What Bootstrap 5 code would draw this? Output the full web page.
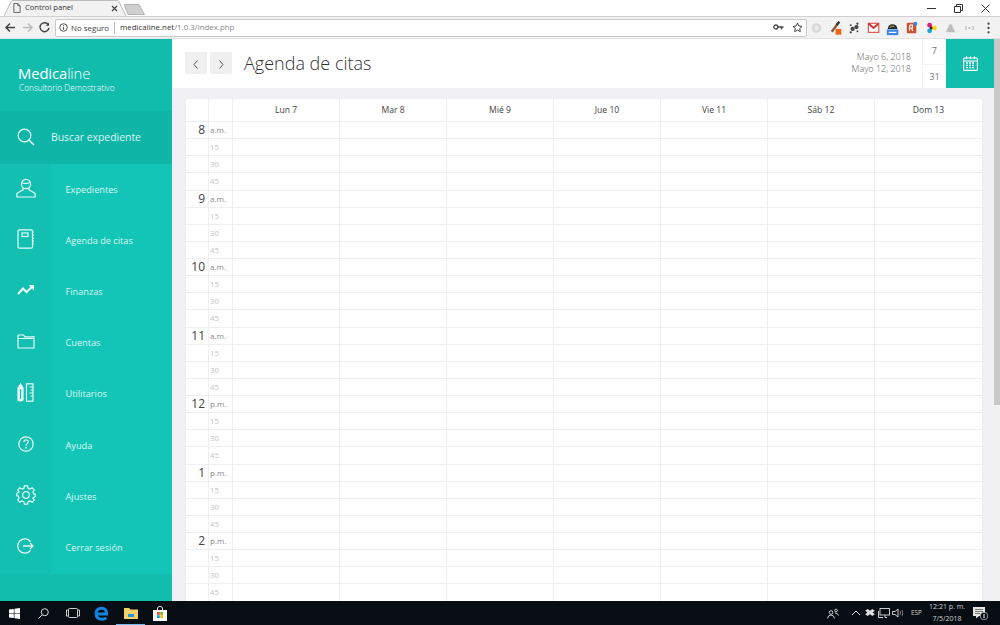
<!DOCTYPE html>
<html lang="es">
  <head>
    <meta charset="UTF-8" />
    <title>Control panel</title>
    <link href="https://cdn.jsdelivr.net/npm/bootstrap@5.3.3/dist/css/bootstrap.min.css" rel="stylesheet" />
    <style>
      html, body { height: 100%; overflow: hidden; }
      body { font-family: "Open Sans", "Liberation Sans", sans-serif; background: #fff; color: #333; display: flex; flex-direction: column; width: 1000px; height: 625px; }

      /* browser chrome */
      .tab-strip { height: 16px; background: #fff; flex: none; font-family: "Open Sans", "Liberation Sans", Arial, sans-serif; }
      .chrome-tab { width: 122px; height: 16px; margin-left: 4px; padding: 0 8px 0 9px; font-size: 7.6px; color: #333; position: relative; }
      .tab-shape { position: absolute; left: 0; top: 0; }
      .tab-text { position: relative; }
      .new-tab { width: 21px; height: 11px; margin: 4px 0 0 -2px; }
      .win-btns { width: 150px; margin-right: 1px; }
      .win-btn { width: 27px; height: 16px; }
      .tool-bar { height: 23px; background: #f2f2f2; flex: none; border-top: 1px solid #d0d0d0; border-bottom: 1px solid #e2e2e2; padding-left: 2px; font-family: "Open Sans", "Liberation Sans", Arial, sans-serif; }
      .nav-arrow { width: 17px; height: 17px; flex: none; }
      .addr-bar { width: 752px; height: 18px; margin-left: 2px; background: #fff; border: 1px solid #c9c9c9; border-radius: 2px; font-size: 7.9px; padding: 0 3px 0 3px; flex: none; }
      .addr-safe { color: #444; padding-right: 5px; margin-right: 5px; border-right: 1px solid #bbb; line-height: 12px; margin-left: 3px; }
      .addr-host { color: #333; }
      .addr-path { color: #888; }
      .ext-row { flex: none; }
      .ext-icon { width: 19.1px; height: 16px; flex: none; }

      /* app */
      .app-row { flex: 1 1 auto; min-height: 0; }
      .side-panel { width: 172px; flex: none; background: #12bdae; color: #d8f5f2; }
      .brand-box { height: 72px; padding: 26px 0 0 18px; background: #11bcad; }
      .brand-name { font-size: 14.8px; line-height: 17px; color: #fff; font-weight: 400; letter-spacing: -.1px; }
      .brand-name span { font-weight: 300; }
      .brand-sub { font-size: 8.3px; line-height: 11px; font-weight: 300; color: #fff; padding-left: 1px; }
      .search-row { height: 53px; background: #0fb5a6; font-size: 10.4px; color: #dcf6f3; }
      .search-ico { width: 51px; padding-bottom: 1px; }
      .menu-row { height: 51.2px; font-size: 9.2px; color: #dcf6f3; text-decoration: none; background: #13c5b6; }
      .menu-ico { width: 51px; height: 100%; background: #12bfb0; flex: none; padding-bottom: 4px; }
      .menu-txt { padding-left: 14.5px; }

      .main-pane { flex: 1 1 auto; min-width: 0; background: #f0f0f5; }
      .head-bar { height: 49px; background: #fff; flex: none; padding-left: 13px; }
      .pager-btn { width: 22px; height: 22px; background: #f0f0f0; border: 0; border-radius: 2px; padding: 3px 0 0; margin: 0 3px 2px 0; }
      .page-title { font-size: 18px; font-weight: 300; color: #333; margin: 0 0 2px 9px; line-height: 24px; }
      .date-range { font-size: 9px; line-height: 12px; color: #666; text-align: right; padding: 0 11px 2px 0; font-weight: 300; }
      .range-nums { width: 24px; font-size: 9.2px; color: #777; text-align: center; border-left: 1px solid #f3f3f3; }
      .range-nums > div { height: 24.5px; line-height: 24.5px; }
      .range-nums > div + div { border-top: 1px solid #f3f3f3; }
      .cal-btn { width: 48px; background: #12bdae; }
      .scroll-rail { width: 6px; background: #f1f1f1; flex: none; }
      .scroll-thumb { height: 366px; background: #c8c8c8; }

      .sheet-wrap { flex: 1 1 auto; min-height: 0; overflow: hidden; padding: 10px 12px 0 13px; }
      .week-sheet { background: #fff; width: 797px; table-layout: fixed; border-collapse: collapse; margin: 0; }
      .week-sheet th, .week-sheet td { border: 1px solid #efefef; padding: 0; }
      .week-sheet th { height: 23px; font-size: 8.6px; font-weight: 400; text-align: center; color: #444; vertical-align: middle; padding-top: 1px; }
      .week-sheet td { height: 17.125px; line-height: 12px; }
      .hour-num { font-size: 12px; color: #444; text-align: right; padding-right: 3px !important; font-weight: 400; }
      .hour-mer { font-size: 8px; color: #888; padding-left: 1px !important; }
      .hour-min { font-size: 7.8px; color: #c4c4c4; padding-left: 1px !important; }
      .col-hour { width: 23px; }
      .col-mer { width: 24px; }
      .col-day { width: 107px; }
      .col-last { width: 108px; }

      /* taskbar */
      .task-bar { height: 24px; background: #070d12; flex: none; color: #cfd2d4; font-family: "Open Sans", "Liberation Sans", Arial, sans-serif; font-size: 6.4px; }
      .task-ico { width: 29px; height: 24px; }
      .task-ico.is-open { border-bottom: 1px solid #76b9ed; }
      .tray-ico { width: 14px; height: 24px; }
      .tray-people { margin-right: 9px; }
      .tray-lang { width: 11px; margin: 0 7px 0 6px; text-align: center; white-space: nowrap; display: flex; justify-content: center; }
      .clock-box { width: 36px; text-align: center; line-height: 12px; font-size: 7px; white-space: nowrap; margin-right: 7px; display: flex; flex-direction: column; align-items: center; }
      .tray-notify { width: 16px; margin-right: 12px; }
    </style>
  </head>
  <body>
    <div class="tab-strip d-flex">
      <div class="chrome-tab d-flex align-items-center">
        <svg class="tab-shape" width="124" height="16" viewBox="0 0 124 16"><path d="M0 16 L7 1.5 Q7.5 .5 9 .5 H113 Q114.500 .5 115 1.500 L122 16" fill="#f2f2f2" stroke="#bdbdbd" /></svg>
        <svg class="tab-text me-1" width="8" height="10" viewBox="0 0 9 11" fill="none" stroke="#555"><path d="M1 .5 H5.500 L8 3 V10.500 H1 Z M5.500 .5 V3 H8" /></svg>
        <span class="tab-text flex-grow-1">Control panel</span>
        <svg class="tab-text" width="7" height="7" viewBox="0 0 7 7" stroke="#444" stroke-width="1.200"><path d="M1 1 L6 6 M6 1 L1 6" /></svg>
      </div>
      <svg class="new-tab" viewBox="0 0 21 11"><path d="M0 .5 H15 L20.500 10.500 H4 Z" fill="#cfcfcf" stroke="#b5b5b5" /></svg>
      <div class="win-btns d-flex ms-auto justify-content-end">
        <div class="win-btn d-flex align-items-center justify-content-center"><svg width="9" height="9" stroke="#333"><path d="M0 4.500 H9" /></svg></div>
        <div class="win-btn d-flex align-items-center justify-content-center"><svg width="9" height="9" fill="none" stroke="#333"><path d="M.5 2.500 H6.500 V8.500 H.5 Z M2.500 2.500 V.5 H8.500 V6.500 H6.500" /></svg></div>
        <div class="win-btn d-flex align-items-center justify-content-center"><svg width="9" height="9" stroke="#333"><path d="M.5 .5 L8.500 8.500 M8.500 .5 L.5 8.500" /></svg></div>
      </div>
    </div>

    <div class="tool-bar d-flex align-items-center">
      <svg class="nav-arrow" viewBox="0 0 17 17" fill="none" stroke="#444" stroke-width="1.500"><path d="M13 8.500 H4 M8 4.500 L4 8.500 L8 12.500" /></svg>
      <svg class="nav-arrow" viewBox="0 0 17 17" fill="none" stroke="#bbb" stroke-width="1.500"><path d="M4 8.500 H13 M9 4.500 L13 8.500 L9 12.500" /></svg>
      <svg class="nav-arrow" viewBox="0 0 17 17" fill="none" stroke="#444" stroke-width="1.400"><path d="M12.500 6 A4.500 4.500 0 1 0 13 9" /><path d="M13 3.500 V6.800 H9.700" fill="#444" stroke="none" /></svg>
      <div class="addr-bar d-flex align-items-center">
        <svg width="9" height="9" viewBox="0 0 10 10" fill="none" stroke="#444"><circle cx="5" cy="5" r="4.200" /><path d="M5 4.300 V7.500 M5 2.500 V3.500" /></svg>
        <span class="addr-safe">No seguro</span>
        <span class="addr-host">medicaline.net</span><span class="addr-path">/1.0.3/index.php</span>
        <svg class="ms-auto me-1" width="11" height="7" viewBox="0 0 11 7" fill="none" stroke="#444" stroke-width="1.300"><circle cx="2.800" cy="3" r="2" /><path d="M5 3 H10.500 M8.500 3 V5.500" /></svg>
        <svg class="ms-1" width="11" height="11" viewBox="0 0 11 11" fill="none" stroke="#444"><path d="M5.500 1 L6.900 4 L10 4.400 L7.700 6.500 L8.300 9.700 L5.500 8.100 L2.700 9.700 L3.300 6.500 L1 4.400 L4.100 4 Z" /></svg>
      </div>
      <div class="ext-row d-flex align-items-center">
        <svg class="ext-icon" viewBox="0 0 20 16"><circle cx="10" cy="8" r="5" fill="#d8d8d8" /><circle cx="10" cy="8" r="2.500" fill="#ececec" /></svg>
        <svg class="ext-icon" viewBox="0 0 20 16"><path d="M6 12 L12 4" stroke="#8a5a3a" stroke-width="2.500" /><path d="M11 5 L14 1.500" stroke="#333" stroke-width="2.500" /><rect x="10" y="9" width="6" height="6" fill="#f2640f" /></svg>
        <svg class="ext-icon" viewBox="0 0 20 16" fill="#444"><circle cx="8" cy="9" r="2.200" /><circle cx="12" cy="7" r="2.200" /><circle cx="13" cy="3.500" r="1.200" /><circle cx="6" cy="12.500" r="1.200" /><circle cx="6" cy="5" r="1" /><circle cx="13" cy="11.500" r="1" /></svg>
        <svg class="ext-icon" viewBox="0 0 20 16"><rect x="4.500" y="3" width="11" height="9.500" fill="#fff" stroke="#d3332b" /><path d="M5 3.500 L10 8 L15 3.500" fill="none" stroke="#d3332b" stroke-width="2" /></svg>
        <svg class="ext-icon" viewBox="0 0 20 16"><path d="M5 9 A5 5 0 0 1 15 9 Z" fill="#1c2a36" /><path d="M7 8 A3 3 0 0 1 12 7" fill="none" stroke="#e8b030" /><rect x="4" y="9.500" width="12" height="6" fill="#3d85e6" /><rect x="6" y="12" width="8" height="1.200" fill="#fff" /></svg>
        <svg class="ext-icon" viewBox="0 0 20 16"><rect x="5" y="2.500" width="10" height="11" rx="1" fill="#c8512b" /><path d="M8 5 V11 M8 5 H11 V8 H8 M9.500 8 L11.500 11" fill="none" stroke="#fff" stroke-width="1.100" /><circle cx="14" cy="3.500" r="2" fill="#3d85e6" /></svg>
        <svg class="ext-icon" viewBox="0 0 20 16"><circle cx="8" cy="5" r="2.500" fill="#d61f7e" /><circle cx="8" cy="11" r="2.500" fill="#16a5d8" /><circle cx="13" cy="8" r="2.500" fill="#f4d21e" /><circle cx="9.500" cy="8" r="1.500" fill="#222" /></svg>
        <svg class="ext-icon" viewBox="0 0 20 16"><path d="M5 12.500 L9 4 H11 L15 12.500 Z" fill="#bdbdbd" /></svg>
        <svg class="ext-icon" viewBox="0 0 20 16" fill="none" stroke="#aaa"><path d="M6.500 6 Q5.500 8 6.500 10 M13.500 6 Q14.500 8 13.500 10" /><circle cx="10" cy="8" r="1" fill="#aaa" stroke="none" /></svg>
        <svg class="ext-icon" viewBox="0 0 20 16" fill="#444"><circle cx="10" cy="3.500" r="1.200" /><circle cx="10" cy="8" r="1.200" /><circle cx="10" cy="12.500" r="1.200" /></svg>
      </div>
    </div>

    <div class="app-row d-flex">
      <aside class="side-panel d-flex flex-column">
        <div class="brand-box">
          <div class="brand-name">Medica<span>line</span></div>
          <div class="brand-sub">Consultorio Demostrativo</div>
        </div>
        <div class="search-row d-flex align-items-center">
          <div class="search-ico d-flex justify-content-center">
            <svg width="18" height="18" viewBox="0 0 18 18" fill="none" stroke="#e8fbf9" stroke-width="1.200"><circle cx="7.500" cy="7.500" r="6.300" /><path d="M12 12 L17 17" stroke-width="1.600" /></svg>
          </div>
          <span>Buscar expediente</span>
        </div>
        <a class="menu-row d-flex align-items-center" href="#">
          <span class="menu-ico d-flex align-items-center justify-content-center">
            <svg width="20" height="20" viewBox="0 0 20 20" fill="none" stroke="#e8fbf9" stroke-width="1.200"><circle cx="10" cy="6" r="4.600" /><path d="M5.600 5 Q10 6 14.400 4.500" /><path d="M7 10 V12 L1.500 15 Q.800 15.500 .800 16.500 V19 H19.200 V16.500 Q19.200 15.500 18.500 15 L13 12 V10" /></svg>
          </span>
          <span class="menu-txt">Expedientes</span>
        </a>
        <a class="menu-row d-flex align-items-center" href="#">
          <span class="menu-ico d-flex align-items-center justify-content-center">
            <svg width="18" height="20" viewBox="0 0 18 20" fill="none" stroke="#e8fbf9" stroke-width="1.200"><rect x="1" y=".8" width="14.500" height="18.400" rx="1.500" /><rect x="5" y="4" width="6" height="3.500" /><path d="M15.500 3 H17 M15.500 6 H17 M15.500 9 H17 M15.500 12 H17 M15.500 15 H17" /></svg>
          </span>
          <span class="menu-txt">Agenda de citas</span>
        </a>
        <a class="menu-row d-flex align-items-center" href="#">
          <span class="menu-ico d-flex align-items-center justify-content-center">
            <svg width="18" height="12" viewBox="0 0 18 12" fill="none" stroke="#e8fbf9" stroke-width="2"><path d="M1 10 L6 4.500 L9.500 8 L16 2" /><path d="M11.500 1 H17 V6.500" fill="#e8fbf9" stroke="none" /></svg>
          </span>
          <span class="menu-txt">Finanzas</span>
        </a>
        <a class="menu-row d-flex align-items-center" href="#">
          <span class="menu-ico d-flex align-items-center justify-content-center">
            <svg width="18" height="15" viewBox="0 0 18 15" fill="none" stroke="#e8fbf9" stroke-width="1.200"><path d="M1 4 V2 Q1 1 2 1 H6.500 L8 2.800 H17 V14 H1 Z M1 4.500 H17" /></svg>
          </span>
          <span class="menu-txt">Cuentas</span>
        </a>
        <a class="menu-row d-flex align-items-center" href="#">
          <span class="menu-ico d-flex align-items-center justify-content-center">
            <svg width="17" height="19" viewBox="0 0 17 19" fill="none" stroke="#e8fbf9" stroke-width="1.200"><path d="M1 5 L3.500 1 L6 5 V17 Q3.500 19 1 17 Z" fill="#e8fbf9" /><path d="M3.500 6 V16" stroke="#12bfb0" /><rect x="9.500" y=".8" width="6.500" height="17.400" /><path d="M12.500 4 H16 M13.500 7 H16 M12.500 10 H16 M13.500 13 H16" /></svg>
          </span>
          <span class="menu-txt">Utilitarios</span>
        </a>
        <a class="menu-row d-flex align-items-center" href="#">
          <span class="menu-ico d-flex align-items-center justify-content-center">
            <svg width="16" height="16" viewBox="0 0 16 16" fill="none" stroke="#e8fbf9" stroke-width="1.200"><circle cx="8" cy="8" r="7.200" /><path d="M5.800 6 Q6 3.900 8 3.900 Q10.200 3.900 10.200 5.800 Q10.200 7 9 7.700 Q8 8.300 8 9.700" /><path d="M8 11 V12.500" stroke-width="1.500" /></svg>
          </span>
          <span class="menu-txt">Ayuda</span>
        </a>
        <a class="menu-row d-flex align-items-center" href="#">
          <span class="menu-ico d-flex align-items-center justify-content-center">
            <svg width="20" height="20" viewBox="0 0 20 20" fill="none" stroke="#e8fbf9" stroke-width="1.200"><circle cx="10" cy="10" r="3.300" /><path d="M8.400 .8 H11.600 L12.100 3.300 L14.100 4.100 L16.200 2.700 L18.300 5 L16.900 7 L17.700 8.900 L19.200 9.300 V11.700 L16.900 12.900 L16.900 13 L18.300 15 L16.200 17.300 L14.100 15.900 L12.100 16.700 L11.600 19.200 H8.400 L7.900 16.700 L5.900 15.900 L3.800 17.300 L1.700 15 L3.100 13 L2.300 11.100 L.8 10.700 V8.300 L3.100 7.100 L1.700 5 L3.800 2.700 L5.900 4.100 L7.900 3.300 Z" /></svg>
          </span>
          <span class="menu-txt">Ajustes</span>
        </a>
        <a class="menu-row d-flex align-items-center" href="#">
          <span class="menu-ico d-flex align-items-center justify-content-center">
            <svg width="17" height="16" viewBox="0 0 17 16" fill="none" stroke="#e8fbf9" stroke-width="1.300"><path d="M13.500 3.500 A7.200 7.200 0 1 0 13.500 12.500" /><path d="M6 8 H16 M13 5 L16 8 L13 11" /></svg>
          </span>
          <span class="menu-txt">Cerrar sesión</span>
        </a>
      </aside>

      <main class="main-pane d-flex flex-column">
        <header class="head-bar d-flex align-items-center">
          <button class="pager-btn d-flex align-items-center justify-content-center" type="button" aria-label="Anterior"><svg width="6" height="9" viewBox="0 0 6 9" fill="none" stroke="#555"><path d="M4.500 .5 L1 4.500 L4.500 8.500" /></svg></button>
          <button class="pager-btn d-flex align-items-center justify-content-center" type="button" aria-label="Siguiente"><svg width="6" height="9" viewBox="0 0 6 9" fill="none" stroke="#555"><path d="M1.500 .5 L5 4.500 L1.500 8.500" /></svg></button>
          <h1 class="page-title">Agenda de citas</h1>
          <div class="date-range ms-auto">Mayo 6, 2018<br />Mayo 12, 2018</div>
          <div class="range-nums align-self-stretch"><div>7</div><div>31</div></div>
          <div class="cal-btn align-self-stretch d-flex align-items-center justify-content-center">
            <svg width="15" height="15" viewBox="0 0 15 15" fill="none" stroke="#fff" stroke-width="1.100"><rect x=".6" y="2" width="13.800" height="12.400" rx="1" /><path d="M3.500 .3 V3 M7.500 .3 V3 M11.500 .3 V3" /><path d="M.6 5 H14.400" /><path d="M3 7 H12 M3 9.300 H12 M3 11.600 H12" stroke-width="1.300" stroke-dasharray="2 1" /></svg>
          </div>
        </header>
        <div class="sheet-wrap">
          <table class="week-sheet" id="weekSheet">
            <colgroup>
              <col class="col-hour" /><col class="col-mer" /><col class="col-day" /><col class="col-day" /><col class="col-day" /><col class="col-day" /><col class="col-day" /><col class="col-day" /><col class="col-last" />
            </colgroup>
            <thead>
              <tr><th></th><th></th><th>Lun 7</th><th>Mar 8</th><th>Mié 9</th><th>Jue 10</th><th>Vie 11</th><th>Sáb 12</th><th>Dom 13</th></tr>
            </thead>
            <tbody id="weekRows"></tbody>
          </table>
        </div>
      </main>
      <div class="scroll-rail"><div class="scroll-thumb"></div></div>
    </div>

    <footer class="task-bar d-flex align-items-center">
      <div class="task-ico d-flex align-items-center justify-content-center">
        <svg width="11" height="11" viewBox="0 0 11 11" fill="#fff"><path d="M0 1.600 L4.800 .9 V5.200 H0 Z M5.400 .8 L11 0 V5.200 H5.400 Z M0 5.800 H4.800 V10.100 L0 9.400 Z M5.400 5.800 H11 V11 L5.400 10.200 Z" /></svg>
      </div>
      <div class="task-ico d-flex align-items-center justify-content-center">
        <svg width="11" height="11" viewBox="0 0 11 11" fill="none" stroke="#ddd"><circle cx="6.800" cy="4.200" r="3.500" /><path d="M4.300 6.700 L.5 10.500" /></svg>
      </div>
      <div class="task-ico d-flex align-items-center justify-content-center">
        <svg width="14" height="10" viewBox="0 0 14 10" fill="none" stroke="#ccc"><rect x="2.500" y=".5" width="9" height="9" rx="1" /><path d="M2.500 2 H.5 V8 H2.500 M11.500 2 H13.500 V8 H11.500" /></svg>
      </div>
      <div class="task-ico d-flex align-items-center justify-content-center">
        <svg width="15" height="15" viewBox="0 0 14 14" fill="none" stroke="#1383e0" stroke-width="2.800"><path d="M2.500 7.500 H11.800 Q11.800 2 7 2 Q2 2 2 7 Q2 12.300 7.500 12.300 Q10 12.300 11.500 11" /></svg>
      </div>
      <div class="task-ico is-open d-flex align-items-center justify-content-center">
        <svg width="14" height="12" viewBox="0 0 14 12"><path d="M0 1 H5 L6.500 2.500 H14 V12 H0 Z" fill="#f4d06a" /><rect x="4" y="7" width="6" height="3" fill="#2f95d8" /></svg>
      </div>
      <div class="task-ico d-flex align-items-center justify-content-center">
        <svg width="14" height="15" viewBox="0 0 14 15"><path d="M4.500 4 V2 Q4.500 .5 7 .5 Q9.500 .5 9.500 2 V4" fill="none" stroke="#ddd" /><rect y="4" width="14" height="11" fill="#fff" /><rect x="4" y="6" width="2.800" height="2.800" fill="#e8532b" /><rect x="7.200" y="6" width="2.800" height="2.800" fill="#7fba00" /><rect x="4" y="9.200" width="2.800" height="2.800" fill="#00a4ef" /><rect x="7.200" y="9.200" width="2.800" height="2.800" fill="#ffb900" /></svg>
      </div>
      <div class="ms-auto d-flex align-items-center">
        <div class="tray-ico tray-people d-flex align-items-center justify-content-center">
          <svg width="12" height="11" viewBox="0 0 12 11" fill="none" stroke="#ccc"><circle cx="4" cy="4.500" r="1.800" /><path d="M.5 10.500 Q1 7 4 7 Q7 7 7.500 10.500" /><circle cx="9" cy="2.500" r="1.300" /><path d="M8 5 Q10.500 4.500 11.500 7.500" /></svg>
        </div>
        <div class="tray-ico d-flex align-items-center justify-content-center">
          <svg width="10" height="6" viewBox="0 0 10 6" fill="none" stroke="#ddd"><path d="M1 5 L5 1 L9 5" /></svg>
        </div>
        <div class="tray-ico d-flex align-items-center justify-content-center">
          <svg width="10" height="8" viewBox="0 0 11 9" fill="#ddd"><path d="M0 2 L3 0 L5.500 2 L8 0 L11 2 L8.500 4 L11 6 L8 8 L5.500 6 L3 8 L0 6 L2.500 4 Z" /></svg>
        </div>
        <div class="tray-ico d-flex align-items-center justify-content-center">
          <svg width="12" height="10" viewBox="0 0 12 10" fill="none" stroke="#ccc"><rect x="2" y=".5" width="9.500" height="6.500" /><path d="M.5 3 V9.500 H5 M7 7 V9.500 H9" /></svg>
        </div>
        <div class="tray-ico d-flex align-items-center justify-content-center">
          <svg width="12" height="10" viewBox="0 0 12 10" fill="none" stroke="#ccc"><path d="M.5 3.500 H3 L6 1 V9 L3 6.500 H.5 Z" /><path d="M8 3 Q9 5 8 7 M10 2 Q11.500 5 10 8" stroke="#777" /></svg>
        </div>
        <span class="tray-lang">ESP</span>
        <div class="clock-box"><span>12:21 p. m.</span><span>7/5/2018</span></div>
        <div class="tray-ico tray-notify d-flex align-items-center justify-content-center">
          <svg width="15" height="14" viewBox="0 0 15 14"><path d="M0 1 H12 V10 H6 L3 12.500 V10 H0 Z" fill="#e6e6e6" /><path d="M2 3.500 H10 M2 5.500 H10 M2 7.500 H7" stroke="#777" /><circle cx="11" cy="10" r="3.800" fill="#070d12" stroke="#ccc" stroke-width=".7" /><path d="M11 8 V12" stroke="#fff" /></svg>
        </div>
      </div>
    </footer>

    <script src="https://cdn.jsdelivr.net/npm/bootstrap@5.3.3/dist/js/bootstrap.bundle.min.js"></script>
    <script>
      'use strict';

      // horas de la agenda: cada hora son cuatro filas de 15 minutos
      const hoursList = [
        ['8', 'a.m.'], ['9', 'a.m.'], ['10', 'a.m.'], ['11', 'a.m.'],
        ['12', 'p.m.'], ['1', 'p.m.'], ['2', 'p.m.']
      ];
      const rowsEl = document.getElementById('weekRows');
      const emptyDays = '<td></td>'.repeat(7);
      let rowsHtml = '';

      hoursList.forEach(function (hour) {
        rowsHtml += `<tr><td class="hour-num">${hour[0]}</td><td class="hour-mer">${hour[1]}</td>${emptyDays}</tr>`;
        ['15', '30', '45'].forEach(function (min) {
          rowsHtml += `<tr><td></td><td class="hour-min">${min}</td>${emptyDays}</tr>`;
        });
      });
      rowsEl.innerHTML = rowsHtml;
    </script>
  </body>
</html>
